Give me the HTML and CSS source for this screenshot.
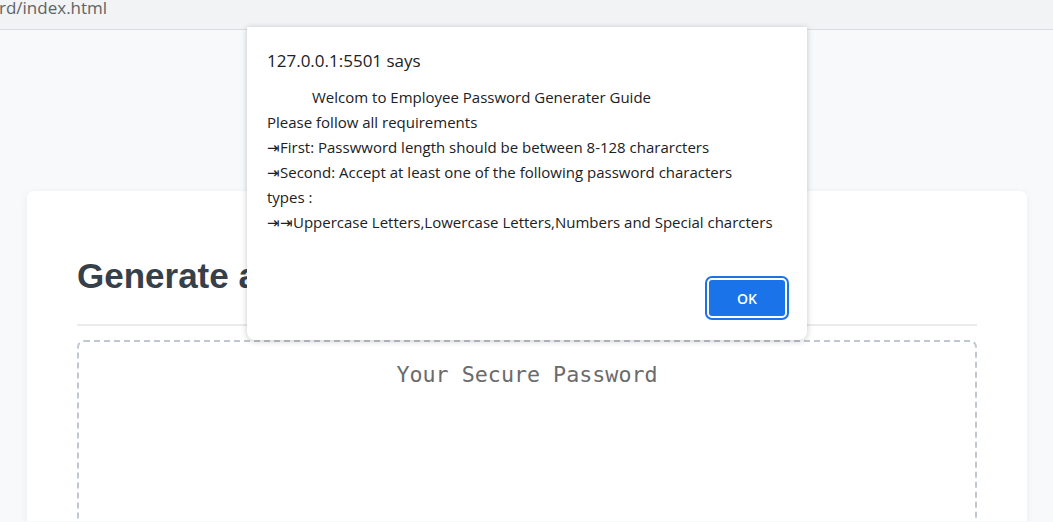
FILE: index.html
```html
<!DOCTYPE html>
<html>
<head>
<meta charset="utf-8">
<link rel="stylesheet" href="styles.css">
</head>
<body>
<div class="urlbar"><span class="url">rd/index.html</span></div>
<main class="page">
  <section class="card">
    <h1 class="title">Generate a Password</h1>
    <hr class="divider">
    <div class="output">Your Secure Password</div>
  </section>
</main>
<div class="dialog">
  <div class="dialog-title">127.0.0.1:5501 says</div>
  <div class="dialog-body">
    <div class="indent">Welcom to Employee Password Generater Guide</div>
    <div>Please follow all requirements</div>
    <div>⇥First: Passwword length should be between 8-128 chararcters</div>
    <div>⇥Second: Accept at least one of the following password characters<br>types :</div>
    <div>⇥⇥Uppercase Letters,Lowercase Letters,Numbers and Special charcters</div>
  </div>
  <div class="dialog-actions"><button class="ok">OK</button></div>
</div>
</body>
</html>
```
FILE: styles.css
```css
html, body { margin: 0; padding: 0; }
body {
  width: 1053px;
  height: 522px;
  overflow: hidden;
  background: #f8f9fa;
  font-family: "Open Sans", "Noto Sans", sans-serif;
  position: relative;
}
.urlbar {
  height: 31px;
  background: #f1f3f4;
  border-bottom: 1px solid #dadce0;
  box-sizing: border-box;
}
.url {
  display: block;
  font-size: 17px;
  line-height: 18px;
  color: #5f6368;
  margin-left: -1px;
  margin-top: -1px;
}
.page {
  padding: 161px 26px 0 27px;
  height: 330px;
  overflow: hidden;
}
.card {
  background: #fff;
  border-radius: 7px;
  box-shadow: 0 2px 8px rgba(0,0,0,0.06);
  padding: 64px 50px 0 50px;
  height: 360px;
  box-sizing: border-box;
}
.title {
  margin: 0;
  font-family: "Liberation Sans", Arial, sans-serif;
  font-weight: bold;
  font-size: 35px;
  line-height: 42px;
  color: #373f4a;
}
.divider {
  margin: 27px 0 14px 0;
  border: 0;
  border-top: 2px solid #e9ebee;
}
.output {
  border: 2px dashed #c0c7d0;
  border-radius: 7px;
  height: 230px;
  text-align: center;
  font-family: "DejaVu Sans Mono", monospace;
  font-size: 21.7px;
  color: #6b6b6b;
  padding-top: 20px;
  box-sizing: border-box;
}
.dialog {
  position: absolute;
  left: 247px;
  top: 27px;
  width: 560px;
  height: 313px;
  background: #fff;
  border-radius: 0 0 8px 8px;
  box-shadow: 0 1px 6px rgba(0,0,0,0.22);
  padding: 20px 20px 0 20px;
  box-sizing: border-box;
  color: #202124;
}
.dialog-title {
  font-size: 17px;
  line-height: 28px;
}
.dialog-body {
  margin-top: 10px;
  font-size: 15px;
  line-height: 25px;
}
.indent { padding-left: 45px; }
.dialog-actions {
  display: flex;
  justify-content: flex-end;
  margin-top: 43px;
}
.ok {
  width: 80px;
  height: 40px;
  background: #1a73e8;
  color: #fff;
  border: 2px solid #fff;
  box-shadow: 0 0 0 2px #1a73e8;
  border-radius: 5px;
  font-family: "Open Sans", sans-serif;
  font-weight: 600;
  font-size: 14px;
}
```
